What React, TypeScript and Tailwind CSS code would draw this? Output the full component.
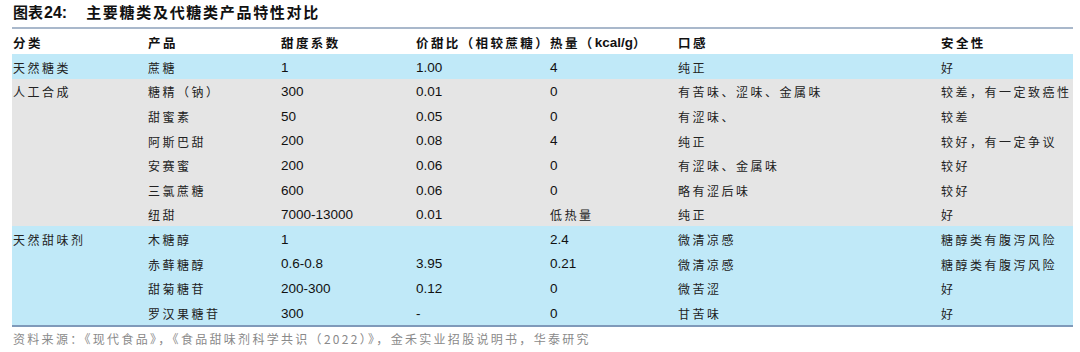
import React from 'react'

const CJK = "font-['Noto_Sans_CJK_SC',sans-serif]"
const NUM = "font-['Liberation_Sans','Noto_Sans_CJK_SC',sans-serif]"

type Row = { cells: string[]; tone: 'blue' | 'grey' }

const ROWS: Row[] = [
  { tone: 'blue', cells: ['天然糖类', '蔗糖', '1', '1.00', '4', '纯正', '好'] },
  { tone: 'grey', cells: ['人工合成', '糖精（钠）', '300', '0.01', '0', '有苦味、涩味、金属味', '较差，有一定致癌性'] },
  { tone: 'grey', cells: ['', '甜蜜素', '50', '0.05', '0', '有涩味、', '较差'] },
  { tone: 'grey', cells: ['', '阿斯巴甜', '200', '0.08', '4', '纯正', '较好，有一定争议'] },
  { tone: 'grey', cells: ['', '安赛蜜', '200', '0.06', '0', '有涩味、金属味', '较好'] },
  { tone: 'grey', cells: ['', '三氯蔗糖', '600', '0.06', '0', '略有涩后味', '较好'] },
  { tone: 'grey', cells: ['', '纽甜', '7000-13000', '0.01', '低热量', '纯正', '好'] },
  { tone: 'blue', cells: ['天然甜味剂', '木糖醇', '1', '', '2.4', '微清凉感', '糖醇类有腹泻风险'] },
  { tone: 'blue', cells: ['', '赤藓糖醇', '0.6-0.8', '3.95', '0.21', '微清凉感', '糖醇类有腹泻风险'] },
  { tone: 'blue', cells: ['', '甜菊糖苷', '200-300', '0.12', '0', '微苦涩', '好'] },
  { tone: 'blue', cells: ['', '罗汉果糖苷', '300', '-', '0', '甘苦味', '好'] },
]

const GRID = 'grid grid-cols-[135px_133px_135px_134px_128px_263px_133px]'

function Cell({ text }: { text: string }) {
  const ascii = /^[\x00-\x7f]*$/.test(text)
  return (
    <div className="flex items-center pl-[1px] pt-[3px] whitespace-nowrap">
      {ascii ? (
        <span className={`${NUM} text-[13.5px] text-[#111]`}>{text}</span>
      ) : (
        <span className={`${CJK} text-[12px] tracking-[2.5px] text-[#222]`}>{text}</span>
      )}
    </div>
  )
}

function Head({ children }: { children: React.ReactNode }) {
  return (
    <div className={`flex items-center pl-[1px] pt-[3px] whitespace-nowrap ${CJK} text-[12.5px] font-bold tracking-[2.4px] text-[#111]`}>
      {children}
    </div>
  )
}

export default function App() {
  return (
    <div className="w-[1080px] h-[352px] bg-white overflow-hidden">
      {/* Title */}
      <div className="h-[27px] pl-[13px] flex items-center pb-[2px]">
        <span className={`${CJK} text-[15px] font-bold text-[#111]`}>图表</span>
        <span className={`${NUM} text-[16px] font-bold text-[#111] ml-[1px]`}>24:</span>
        <span className={`${CJK} text-[15px] font-bold text-[#111] tracking-[1.7px] ml-[19px]`}>
          主要糖类及代糖类产品特性对比
        </span>
      </div>

      {/* Table */}
      <div className="ml-[12px] w-[1061px] border-t-2 border-b-2 border-t-[#a9b8cb] border-b-[#7f9aba]">
        <div className={`${GRID} h-[25px] bg-white`}>
          <Head>分类</Head>
          <Head>产品</Head>
          <Head>甜度系数</Head>
          <Head>价甜比（相较蔗糖）</Head>
          <Head>
            热量（<span className={`${NUM} tracking-normal text-[13.5px]`}>kcal/g</span>）
          </Head>
          <Head>口感</Head>
          <Head>安全性</Head>
        </div>
        {ROWS.map((r, i) => (
          <div
            key={i}
            className={`${GRID} h-[24.6px] ${r.tone === 'blue' ? 'bg-[#c0e9f8]' : 'bg-[#e5e5e5]'}`}
          >
            {r.cells.map((c, j) => (
              <Cell key={j} text={c} />
            ))}
          </div>
        ))}
      </div>

      {/* Source */}
      <div className={`pl-[13px] mt-[3px] ${CJK} text-[12px] tracking-[2.3px] text-[#8a8a8a] whitespace-nowrap`}>
        资料来源：《现代食品》，《食品甜味剂科学共识（2022）》，金禾实业招股说明书，华泰研究
      </div>
    </div>
  )
}
